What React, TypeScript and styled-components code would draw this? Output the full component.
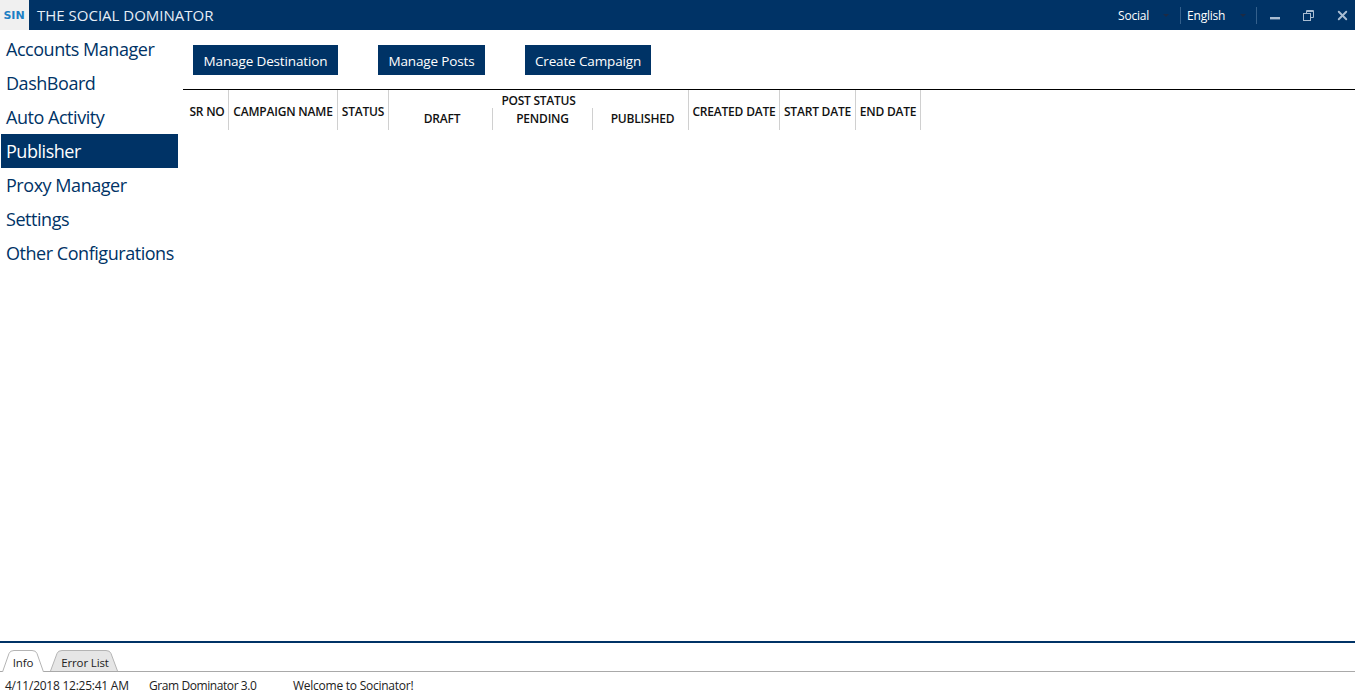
import React from "react";
import styled, { createGlobalStyle } from "styled-components";
import { FiX } from "react-icons/fi";

const NAVY = "#003366";

const GlobalStyle = createGlobalStyle`
  html, body {
    margin: 0;
    padding: 0;
    background: #fff;
    font-family: "Open Sans", "Noto Sans", sans-serif;
  }
  * { box-sizing: border-box; }
`;

const Shell = styled.div`
  height: 100vh;
  display: flex;
  flex-direction: column;
  overflow: hidden;
`;

// Title bar
const TitleBar = styled.header`
  height: 30px;
  flex: none;
  background: ${NAVY};
  display: flex;
  align-items: center;
  color: #fff;
`;

const Logo = styled.div`
  width: 29px;
  height: 30px;
  padding-right: 1px;
  background: #f0f0f0;
  display: flex;
  align-items: center;
  justify-content: center;
  color: #1c7fc4;
  font-family: "DejaVu Sans", sans-serif;
  font-size: 11px;
  font-weight: 700;
`;

const AppName = styled.div`
  margin-left: 8px;
  font-size: 15px;
  color: #e6eef6;
  flex: 1;
`;

const BarSelect = styled.div<{ $width: number; $inset: number; $end: number }>`
  width: ${(p) => p.$width}px;
  height: 17px;
  display: flex;
  align-items: center;
  justify-content: space-between;
  padding: 0 ${(p) => p.$end}px 0 ${(p) => p.$inset}px;
  font-size: 12px;
  letter-spacing: -0.2px;
  border-right: 1px solid #34608c;
`;

const Caret = styled.span`
  width: 0;
  height: 0;
  border-left: 3px solid transparent;
  border-right: 3px solid transparent;
  border-top: 3px solid #1c2b44;
`;

const WinButton = styled.button<{ $width: number; $nudge?: number }>`
  width: ${(p) => p.$width}px;
  height: 30px;
  padding: 0 0 0 ${(p) => p.$nudge ?? 0}px;
  border: 0;
  background: none;
  display: flex;
  align-items: center;
  justify-content: center;
  color: #a9bdd2;
`;

// Main area
const Main = styled.div`
  flex: 1;
  min-height: 0;
  display: flex;
`;

const Sidebar = styled.nav`
  width: 183px;
  flex: none;
  padding: 2px 5px 0 1px;
`;

const NavItem = styled.div<{ $active?: boolean }>`
  height: 34px;
  padding-left: 5px;
  display: flex;
  align-items: center;
  font-size: 18px;
  letter-spacing: -0.46px;
  background: ${(p) => (p.$active ? NAVY : "transparent")};
  color: ${(p) => (p.$active ? "#fff" : NAVY)};
`;

const Content = styled.main`
  flex: 1;
  min-width: 0;
`;

const Toolbar = styled.div`
  height: 59px;
  padding: 15px 0 0 10px;
  display: flex;
  align-items: flex-start;
  gap: 40px;
`;

const ActionButton = styled.button<{ $width: number }>`
  width: ${(p) => p.$width}px;
  height: 30px;
  padding: 2px 0 0;
  border: 0;
  background: ${NAVY};
  color: #fff;
  font-family: inherit;
  font-size: 13.5px;
  letter-spacing: -0.14px;
`;

const HeaderRow = styled.div`
  height: 41px;
  border-top: 1px solid #000;
  display: flex;
`;

const HeaderCell = styled.div<{ $width: number; $low?: boolean; $plain?: boolean; $shift?: number }>`
  width: ${(p) => p.$width}px;
  flex: none;
  display: flex;
  align-items: ${(p) => (p.$low ? "flex-end" : "center")};
  justify-content: center;
  padding-top: ${(p) => (p.$low ? "0" : "2px")};
  padding-bottom: ${(p) => (p.$low ? "3px" : "0")};
  padding-left: ${(p) => p.$shift ?? 0}px;
  border-right: ${(p) => (p.$plain ? "0" : "1px solid #d0d0d0")};
  font-size: 12px;
  font-weight: 600;
  letter-spacing: -0.2px;
  white-space: nowrap;
  color: #111;
`;

const GroupCell = styled.div`
  width: 300px;
  flex: none;
  display: flex;
  flex-direction: column;
  border-right: 1px solid #d0d0d0;
`;

const GroupTitle = styled.div`
  height: 18px;
  padding-top: 2px;
  display: flex;
  align-items: center;
  justify-content: center;
  font-size: 12px;
  font-weight: 600;
  letter-spacing: -0.25px;
  color: #111;
`;

const GroupColumns = styled.div`
  flex: 1;
  display: flex;
`;

// Bottom log panel
const LogPanel = styled.footer`
  height: 53px;
  flex: none;
  border-top: 2px solid ${NAVY};
  display: flex;
  flex-direction: column;
`;

const TabStrip = styled.div`
  height: 29px;
  flex: none;
  padding: 7px 0 0 2px;
  display: flex;
  gap: 6px;
  border-bottom: 1px solid #a9a9a9;
`;

const Tab = styled.div<{ $active?: boolean; $width: number }>`
  position: relative;
  z-index: 0;
  width: ${(p) => p.$width}px;
  height: ${(p) => (p.$active ? "22px" : "21px")};
  padding: 3px 0 0 ${(p) => (p.$active ? "0" : "2px")};
  display: flex;
  align-items: center;
  justify-content: center;
  font-size: 11.5px;
  letter-spacing: -0.14px;
  color: #222;
`;

const TabShape = styled.svg`
  position: absolute;
  inset: 0;
  z-index: -1;
`;

const StatusLine = styled.div`
  flex: 1;
  display: flex;
  align-items: center;
  padding: 4px 0 0 5px;
  font-size: 12px;
  color: #222;
`;

const StatusText = styled.span<{ $width: number; $tight?: boolean }>`
  width: ${(p) => p.$width}px;
  flex: none;
  white-space: nowrap;
  letter-spacing: ${(p) => (p.$tight ? "-0.42px" : "-0.25px")};
`;

const navItems = [
  "Accounts Manager",
  "DashBoard",
  "Auto Activity",
  "Publisher",
  "Proxy Manager",
  "Settings",
  "Other Configurations",
];

// slanted outline shared by both log tabs
const tabPath = (w: number, h: number) =>
  `M0.5 ${h} L7 3.5 Q8 0.5 12 0.5 H${w - 12} Q${w - 8} 0.5 ${w - 7} 3.5 L${w - 0.5} ${h}`;

export default function App() {
  return (
    <Shell>
      <GlobalStyle />
      <TitleBar>
        <Logo>SIN</Logo>
        <AppName>THE SOCIAL DOMINATOR</AppName>
        <BarSelect $width={64} $inset={1} $end={11}>
          Social
          <Caret />
        </BarSelect>
        <BarSelect $width={76} $inset={6} $end={10}>
          English
          <Caret />
        </BarSelect>
        <WinButton $width={36}>
          <svg width="10" height="10" viewBox="0 0 10 10">
            <rect x="0" y="7" width="10" height="2.4" fill="currentColor" />
          </svg>
        </WinButton>
        <WinButton $width={31}>
          <svg width="11" height="11" viewBox="0 0 11 11" fill="none" stroke="currentColor">
            <rect x="0.5" y="3.5" width="7" height="7" />
            <path d="M3.5 3.5V0.5H10.5V7.5H7.5" />
            <path d="M3.5 1.5H10.5" />
          </svg>
        </WinButton>
        <WinButton $width={31} $nudge={5}>
          <FiX size={15} strokeWidth={3} />
        </WinButton>
      </TitleBar>

      <Main>
        <Sidebar>
          {navItems.map((item) => (
            <NavItem key={item} $active={item === "Publisher"}>
              {item}
            </NavItem>
          ))}
        </Sidebar>
        <Content>
          <Toolbar>
            <ActionButton $width={145}>Manage Destination</ActionButton>
            <ActionButton $width={107}>Manage Posts</ActionButton>
            <ActionButton $width={126}>Create Campaign</ActionButton>
          </Toolbar>
          <HeaderRow>
            <HeaderCell $width={46} $shift={3}>
              SR NO
            </HeaderCell>
            <HeaderCell $width={109}>CAMPAIGN NAME</HeaderCell>
            <HeaderCell $width={51}>STATUS</HeaderCell>
            <GroupCell>
              <GroupTitle>POST STATUS</GroupTitle>
              <GroupColumns>
                <HeaderCell $width={104} $low $shift={3}>
                  DRAFT
                </HeaderCell>
                <HeaderCell $width={100} $low>
                  PENDING
                </HeaderCell>
                <HeaderCell $width={95} $low $plain $shift={4}>
                  PUBLISHED
                </HeaderCell>
              </GroupColumns>
            </GroupCell>
            <HeaderCell $width={91}>CREATED DATE</HeaderCell>
            <HeaderCell $width={76}>START DATE</HeaderCell>
            <HeaderCell $width={65}>END DATE</HeaderCell>
          </HeaderRow>
        </Content>
      </Main>

      <LogPanel>
        <TabStrip>
          <Tab $active $width={42}>
            <TabShape width="42" height="22">
              <path d={tabPath(42, 22)} fill="#fff" stroke="#b4b4b4" />
            </TabShape>
            Info
          </Tab>
          <Tab $width={68}>
            <TabShape width="68" height="21">
              <path d={tabPath(68, 21)} fill="#e6e6e6" stroke="#b4b4b4" />
            </TabShape>
            Error List
          </Tab>
        </TabStrip>
        <StatusLine>
          <StatusText $width={144}>4/11/2018 12:25:41 AM</StatusText>
          <StatusText $width={144} $tight>
            Gram Dominator 3.0
          </StatusText>
          <StatusText $width={140}>Welcome to Socinator!</StatusText>
        </StatusLine>
      </LogPanel>
    </Shell>
  );
}
